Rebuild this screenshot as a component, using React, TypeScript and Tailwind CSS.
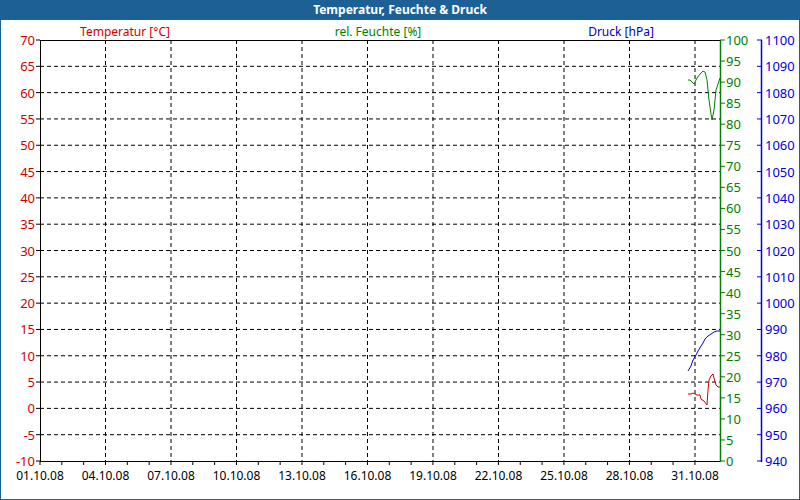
export default function App() {
  const L = 40, T = 40, R = 720, B = 461;
  const tempY = (v: number) => T + ((70 - v) / 80) * (B - T);
  const humY = (v: number) => T + ((100 - v) / 100) * (B - T);
  const prY = (v: number) => T + ((1100 - v) / 160) * (B - T);
  const temps = Array.from({ length: 17 }, (_, i) => 70 - i * 5);
  const hums = Array.from({ length: 21 }, (_, i) => 100 - i * 5);
  const prs = Array.from({ length: 17 }, (_, i) => 1100 - i * 10);
  const dates = Array.from({ length: 11 }, (_, i) => {
    const d = 1 + i * 3;
    return { x: L + i * 65.5, t: (d < 10 ? "0" + d : "" + d) + ".10.08" };
  });
  const minor = Array.from({ length: 31 }, (_, i) => L + i * 21.83);
  return (
    <div className="w-[800px] h-[500px] bg-[#1c6096] flex flex-col font-['Liberation_Sans',Arial,sans-serif]">
      <div className="h-[20px] flex items-center justify-center text-white font-bold text-[12px]">
        Temperatur, Feuchte &amp; Druck
      </div>
      <div className="flex-1 bg-white mx-[1px] mb-[1px]">
        <svg width="798" height="479" viewBox="1 20 798 479" className="font-['Liberation_Sans',Arial,sans-serif]">
          {temps.slice(1, 16).map((v) => (
            <line key={v} x1={L} x2={R} y1={tempY(v)} y2={tempY(v)} stroke="#000" strokeDasharray="4 3" />
          ))}
          {dates.slice(1).map((d) => (
            <line key={d.t} x1={d.x} x2={d.x} y1={T} y2={B} stroke="#000" strokeDasharray="4 3" />
          ))}
          <line x1={L} x2={R} y1={T + 0.5} y2={T + 0.5} stroke="#000" />
          <line x1={L} x2={R} y1={B + 0.5} y2={B + 0.5} stroke="#000" />
          <line x1={L + 0.5} x2={L + 0.5} y1={T} y2={B} stroke="#000" />
          {minor.map((x, i) => (
            <line key={i} x1={x} x2={x} y1={B} y2={B + 4} stroke="#000" />
          ))}
          {temps.map((v) => (
            <g key={v}>
              <line x1={L - 4} x2={L} y1={tempY(v)} y2={tempY(v)} stroke="#000" />
              <text x={L - 5} y={tempY(v) + 5} textAnchor="end" fontSize="13" fill="#d00000">{v}</text>
            </g>
          ))}
          <line x1={R + 0.5} x2={R + 0.5} y1={T} y2={B + 1} stroke="#008000" strokeWidth="1.5" />
          {hums.map((v) => (
            <g key={v}>
              <line x1={R} x2={R + 5} y1={humY(v)} y2={humY(v)} stroke="#008000" />
              <text x={R + 6} y={humY(v) + 5} fontSize="13" fill="#008000">{v}</text>
            </g>
          ))}
          <line x1={761.5} x2={761.5} y1={T} y2={B + 1} stroke="#0000e0" strokeWidth="1.5" />
          {prs.map((v) => (
            <g key={v}>
              <line x1={757} x2={762} y1={prY(v)} y2={prY(v)} stroke="#0000e0" />
              <text x={765} y={prY(v) + 5} fontSize="13" fill="#0000e0">{v}</text>
            </g>
          ))}
          {dates.map((d) => (
            <text key={d.t} x={d.x} y={480} textAnchor="middle" fontSize="12" fill="#000">{d.t}</text>
          ))}
          <text x={125} y={36} textAnchor="middle" fontSize="12" fill="#d00000">Temperatur [°C]</text>
          <text x={378} y={36} textAnchor="middle" fontSize="12" fill="#008000">rel. Feuchte [%]</text>
          <text x={621} y={36} textAnchor="middle" fontSize="12" fill="#0000c0">Druck [hPa]</text>
          <polyline fill="none" stroke="#008000" points="688,80 690,80 694,84 697,78 700,74 703,71 705,72 707,80 709,100 711,114 712,120 714,110 716,90 718,84 720,78" />
          <polyline fill="none" stroke="#0000e0" points="688,371 691,366 693,360 696,355 698,351 701,346 703,343 705,339 708,336 711,334 714,332 717,331 720,331" />
          <polyline fill="none" stroke="#d00000" points="688,394 691,394 693,393 697,395 700,395 701,399 704,401 707,405 708,390 709,380 711,376 713,374 714,378 716,385 718,387 720,387" />
        </svg>
      </div>
    </div>
  );
}
